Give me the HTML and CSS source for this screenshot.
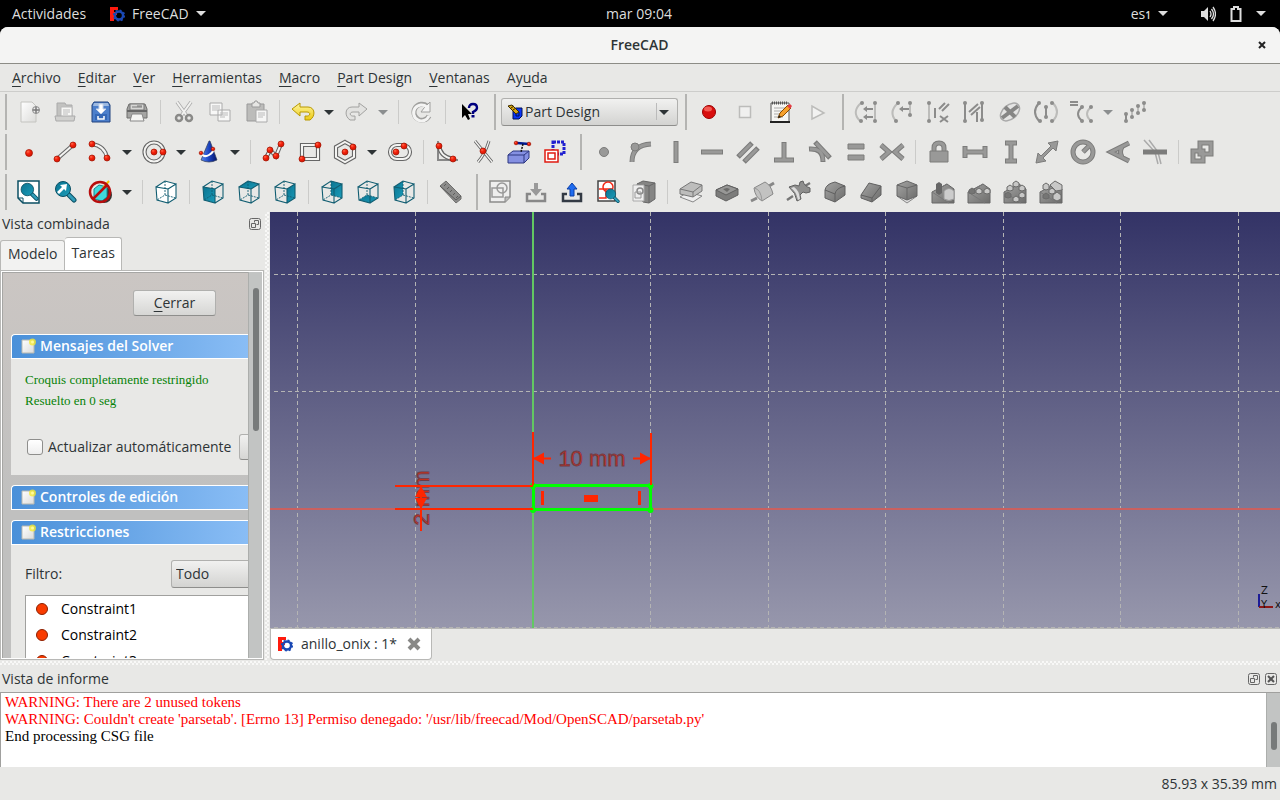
FILE: index.html
```
<!DOCTYPE html>
<html lang="es">
<head>
  <meta charset="UTF-8">
  <meta name="viewport" content="width=device-width, initial-scale=1.0">
  <title>FreeCAD</title>
  <link rel="stylesheet" href="styles.css">
</head>
<body>

<!-- shared gradients and symbols -->
<svg class="sprite" aria-hidden="true">
  <defs>
    <radialGradient id="red" cx=".35" cy=".3" r=".8"><stop offset="0" stop-color="#ff6a4a"/><stop offset=".4" stop-color="#f5200c"/><stop offset="1" stop-color="#c81400"/></radialGradient>
    <linearGradient id="gold" x2="0" y2="1"><stop offset="0" stop-color="#fff6a0"/><stop offset="1" stop-color="#edcb15"/></linearGradient>
    <linearGradient id="paper" x2="1" y2="1"><stop offset="0" stop-color="#fff"/><stop offset="1" stop-color="#dcdcda"/></linearGradient>
    <linearGradient id="teal" x2="1" y2="1"><stop offset="0" stop-color="#0a7491"/><stop offset="1" stop-color="#1b9bb8"/></linearGradient>
    <linearGradient id="grey" x2="1" y2="1"><stop offset="0" stop-color="#a4a4a3"/><stop offset="1" stop-color="#6c6c6b"/></linearGradient>
    <linearGradient id="cone" x2="1"><stop offset="0" stop-color="#5a8af0"/><stop offset=".5" stop-color="#1c44c0"/><stop offset="1" stop-color="#04146c"/></linearGradient>
    <symbol id="logo" viewBox="0 0 16 16">
      <path d="M1 1h8v3H5v2h3v3H5v6H1z" fill="#ff1a0d"/>
      <circle cx="10" cy="9.500" r="4" fill="none" stroke="#1a48b4" stroke-width="2.400"/>
      <circle cx="10" cy="9.500" r="5.300" fill="none" stroke="#1a48b4" stroke-width="1.600" stroke-dasharray="2 2.160"/>
    </symbol>
    <symbol id="cube" viewBox="0 0 24 24">
      <path class="wire" d="M2 7 14 9V23L3 20zM14 9 22 4V18L14 23M2 7 11 1 22 4"/>
      <path class="wire dash" d="M11 1V15L3 20M11 15 22 18"/>
    </symbol>
    <symbol id="lens" viewBox="0 0 24 24">
      <path d="M15 14l6 6" stroke="#0b4f63" stroke-width="5" stroke-linecap="round"/>
      <path d="M16 15l5 5" stroke="#2f9cb8" stroke-width="3" stroke-linecap="round"/>
      <circle cx="10" cy="9" r="7.500" fill="url(#teal)" stroke="#0b4f63"/>
    </symbol>
    <symbol id="task" viewBox="0 0 16 16">
      <path d="M2 2h12v13H2z" fill="url(#paper)" stroke="#b9b9b0"/>
      <circle cx="12.500" cy="4" r="3.500" fill="#f5ea2a" opacity=".75"/><circle cx="12.500" cy="4" r="1.500" fill="#fffb9a"/>
    </symbol>
    <symbol id="float" viewBox="0 0 12 12">
      <rect x=".5" y=".5" width="11" height="11" rx="2" class="thin"/>
      <path d="M5.500 4.500V2.500h4v4h-2M2.500 5.500h4v4h-4z" class="thin"/>
    </symbol>
    <symbol id="block" viewBox="0 0 24 24">
      <path d="M1 12 16 4l7 5v14H1z" fill="url(#grey)" stroke="#666"/>
      <path d="M1 12 18 23M6 10 16 4" stroke="#777" fill="none"/>
    </symbol>
  </defs>
</svg>

<div class="topbar">
  <div class="topbar-side">
    <button>Actividades</button>
    <button><svg class="logo"><use href="#logo"/></svg>FreeCAD<i class="caret"></i></button>
  </div>
  <time>mar 09:04</time>
  <div class="topbar-side right">
    <button>es<small>1</small><i class="caret"></i></button>
    <button class="system" aria-label="Sistema">
      <svg width="16" height="16" viewBox="0 0 16 16"><path d="M1 5h3l4-4v14l-4-4H1z" fill="#ddd"/><path d="M10 5q2 3 0 6M11.500 3q4 5 0 10M13 1q5 7 0 14" fill="none" stroke="#ddd" stroke-width="1.300"/></svg>
      <svg width="16" height="16" viewBox="0 0 16 16"><path d="M3.500 3H6V1h4v2h2.500v12h-9z" fill="none" stroke="#ddd" stroke-width="2"/></svg>
      <i class="caret"></i>
    </button>
  </div>
</div>

<div class="window">
  <header class="titlebar">
    <h1>FreeCAD</h1>
    <button aria-label="Cerrar ventana"><svg width="8" height="8" viewBox="0 0 8 8"><path d="M1 1l6 6M7 1L1 7" stroke="#222" stroke-width="2"/></svg></button>
  </header>

  <nav class="menubar">
    <button><u>A</u>rchivo</button>
    <button><u>E</u>ditar</button>
    <button><u>V</u>er</button>
    <button><u>H</u>erramientas</button>
    <button><u>M</u>acro</button>
    <button><u>P</u>art Design</button>
    <button><u>V</u>entanas</button>
    <button>Ay<u>u</u>da</button>
  </nav>

  <!-- file, workbench, macro, sketch tools -->
  <div class="toolbar">
    <span class="grip first"></span>
    <button class="tool off" aria-label="Nuevo"><svg viewBox="0 0 24 24"><path d="M4 2h11l4 4v16H4z" fill="url(#paper)" stroke="#c4c4c0"/><circle cx="19" cy="10" r="3.500" fill="#eee" stroke="#888"/><path d="M16 10h6M19 7v6" stroke="#777" stroke-width="1.500"/></svg></button>
    <button class="tool off" aria-label="Abrir"><svg viewBox="0 0 24 24"><path d="M4 3h8l1 2h6v12H4z" fill="#c2c2c0" stroke="#aaa"/><path d="M8 7h11v12H8z" fill="#f7f7f5" stroke="#bbb"/><path d="M10 10h7M10 12h7M10 14h5" stroke="#bbb"/><path d="M2 16h20l-1 5H3z" fill="#d0d0ce" stroke="#aaa"/></svg></button>
    <button class="tool" aria-label="Guardar"><svg viewBox="0 0 24 24"><path d="M5 2h14l2 3v17H3V5z" fill="#4c7fcb" stroke="#20437f"/><path d="M5 3h14l1 3H4z" fill="#9db9e0"/><path d="M6 14h12v6H6z" fill="#3568b6"/><path d="M10 4h4v5h3l-5 5-5-5h3z" fill="#fff" stroke="#c7d4e8"/><path d="M9 16v3h6v-3" fill="none" stroke="#fff" stroke-width="1.500"/></svg></button>
    <button class="tool" aria-label="Imprimir"><svg viewBox="0 0 24 24"><path d="M4 4h16l2 5v9H2V9z" fill="#a5a5a3" stroke="#6e6e6c"/><path d="M5 4h14v6H5z" fill="#d6d6d4" stroke="#777"/><path d="M7 7h10M12 6h5" stroke="#777"/><path d="M2 11h20" stroke="#666" stroke-width="2"/><path d="M7 14h10l2 7H5z" fill="#f4f4f2" stroke="#888"/></svg></button>
    <span class="sep"></span>
    <button class="tool off" aria-label="Cortar"><svg viewBox="0 0 24 24"><path d="M5 2l10 14M19 2L9 16" stroke="#aaa" stroke-width="3.500"/><path d="M5 2l10 14M19 2L9 16" stroke="#f2f2f0" stroke-width="2"/><circle cx="7" cy="18" r="3" fill="none" stroke="#8a8a88" stroke-width="2.500"/><circle cx="17" cy="18" r="3" fill="none" stroke="#8a8a88" stroke-width="2.500"/></svg></button>
    <button class="tool off" aria-label="Copiar"><svg viewBox="0 0 24 24"><path d="M2 3h12v12H2zM10 10h12v11H10z" fill="#f8f8f7" stroke="#aaa"/><path d="M4 6h8M4 8h8M4 10h6M12 13h8M12 15h8M12 17h5" stroke="#bbb"/></svg></button>
    <button class="tool off" aria-label="Pegar"><svg viewBox="0 0 24 24"><path d="M3 4h17v17H3z" fill="#bcbcba" stroke="#999"/><path d="M8 3h2l1-2h2l1 2h2v4H8z" fill="#e6e6e4" stroke="#999"/><path d="M12 10h11v12H12z" fill="#f6f6f5" stroke="#aaa"/><path d="M14 13h7M14 15h7M14 17h5" stroke="#bbb"/></svg></button>
    <span class="sep"></span>
    <button class="tool" aria-label="Deshacer"><svg viewBox="0 0 24 24"><path d="M1 9l8-6v4h8c7 0 8 9 2 13h-5v-4c6 1 6-4 2-4H9v4z" fill="url(#gold)" stroke="#b89800" stroke-linejoin="round"/></svg></button>
    <button class="drop" aria-label="Lista de deshacer"></button>
    <button class="tool off" aria-label="Rehacer"><svg viewBox="0 0 24 24"><path d="M22 9l-8-6v4H7c-7 0-8 9-2 13h5v-4c-6 1-6-4-2-4h6v4z" fill="#e2e2e0" stroke="#a2a2a0" stroke-linejoin="round"/></svg></button>
    <button class="drop off" aria-label="Lista de rehacer"></button>
    <span class="sep"></span>
    <button class="tool off" aria-label="Recalcular"><svg viewBox="0 0 24 24"><path d="M17 6a8 8 0 1 0 2 10" fill="none" stroke="#a0a09e" stroke-width="5"/><path d="M20 2v10h-9l3-4z" fill="#f4f4f3" stroke="#a0a09e"/><path d="M17 7a8 8 0 1 0 2 9" fill="none" stroke="#f4f4f3" stroke-width="3"/></svg></button>
    <span class="sep"></span>
    <button class="tool" aria-label="¿Qué es esto?"><svg viewBox="0 0 24 24"><path d="M5 4v14l3-3 3 5 2-1-2-5h4z" fill="#000"/><path d="M12 8q0-4 4-4t4 4q0 2-4 4v2" fill="none" stroke="#00007f" stroke-width="2.400"/><path d="M14.500 15h3v2.500h-3z" fill="#00007f"/></svg></button>
    <span class="grip"></span>
    <div class="workbench">
      <svg viewBox="0 0 16 16"><path d="M6 6l3-2h6v8l-3 3H6z" fill="#0b35f8" stroke="#001050"/><path d="M9 12V8h3v4z" fill="none" stroke="#001050"/><path d="M1 2l4-1 7 7-3 2z" fill="#d6a411" stroke="#3d2c00"/><path d="M4 4l3-2M6 6l3-2" stroke="#3d2c00"/></svg>
      <select aria-label="Entorno de trabajo"><option>Part Design</option></select>
    </div>
    <span class="grip"></span>
    <button class="tool" aria-label="Grabar macro"><svg viewBox="0 0 24 24"><circle cx="12" cy="12" r="6.500" fill="#d80e0e" stroke="#9b0000"/><ellipse cx="11" cy="9" rx="4" ry="2.500" fill="#ff7b70" opacity=".7"/></svg></button>
    <button class="tool off" aria-label="Detener macro"><svg viewBox="0 0 24 24"><path d="M6.500 6.500h11v11h-11z" fill="#f0f0ef" stroke="#bcbcba" stroke-width="1.500"/></svg></button>
    <button class="tool" aria-label="Macros"><svg viewBox="0 0 24 24"><path d="M2 3h18v19H2z" fill="#f6f6f4" stroke="#555"/><path d="M1 22h20" stroke="#222" stroke-width="2"/><path d="M3 3h16" stroke="#555" stroke-width="3" stroke-dasharray="1 1"/><path d="M5 8h11M5 11h9M5 14h6M5 17h9" stroke="#aaa"/><path d="M9 18l2-5 8-8 3 3-8 8z" fill="#f7a12c" stroke="#8a4c00"/><path d="M18 6l3-2 2 2-2 3z" fill="#e33c45"/><path d="M9 18l1-3 2 2z" fill="#222"/></svg></button>
    <button class="tool off" aria-label="Ejecutar macro"><svg viewBox="0 0 24 24"><path d="M7 6v13l12-6z" fill="#f2f2f1" stroke="#bcbcba" stroke-width="1.500"/></svg></button>
    <span class="grip"></span>
    <button class="tool off" aria-label="Cerrar forma"><svg viewBox="0 0 24 24"><path class="pale" d="M7 3Q-3 12 6 21M21 3v18"/><path class="flat" d="M19 9h-7M19 17h-7"/><path class="fill" d="M13 6v6l-4-3zM13 14v6l-4-3z"/><g class="dots"><circle cx="8" cy="3" r="2"/><circle cx="7" cy="21" r="2"/><circle cx="21" cy="3" r="2"/><circle cx="21" cy="21" r="2"/></g></svg></button>
    <button class="tool off" aria-label="Conectar aristas"><svg viewBox="0 0 24 24"><path class="pale" d="M8 3Q-2 12 6 21M20 3v12"/><path class="flat" d="M19 9h-7"/><path class="fill" d="M13 6v6l-4-3z"/><g class="dots"><circle cx="8" cy="3" r="2"/><circle cx="6" cy="21" r="2"/><circle cx="20" cy="3" r="2"/><circle cx="20" cy="15" r="2"/></g></svg></button>
    <button class="tool off" aria-label="Seleccionar restricciones"><svg viewBox="0 0 24 24"><path class="pale" d="M3 3v18"/><path class="flat" d="M9 8v10M13 9l6-6M16 11l7-7M14 16l4 3-4 3M22 16l-4 3 4 3"/><g class="dots"><circle cx="3" cy="3" r="2"/><circle cx="3" cy="21" r="2"/></g></svg></button>
    <button class="tool off" aria-label="Seleccionar elementos"><svg viewBox="0 0 24 24"><path class="flat" d="M3 3v18M20 2v18M7 12l9-8M9 15l9-8M15 12v10"/><g class="dots"><circle cx="3" cy="3" r="2"/><circle cx="3" cy="21" r="2"/><circle cx="20" cy="3" r="2"/><circle cx="20" cy="20" r="2"/></g></svg></button>
    <button class="tool off" aria-label="Geometría interna"><svg viewBox="0 0 24 24"><ellipse cx="12" cy="12" rx="11" ry="7" transform="rotate(-40 12 12)" fill="#e4e4e3" stroke="#aaa" stroke-width="1.500"/><path d="M4 18L20 6M7 7l10 10" stroke="#868685" stroke-width="4"/></svg></button>
    <button class="tool off" aria-label="Simetría"><svg viewBox="0 0 24 24"><path class="pale" d="M19 3q8 9 0 18"/><path class="flat" d="M5 3q-8 9 0 18M12 8v10"/><g class="dots"><circle cx="5" cy="3" r="2"/><circle cx="6" cy="21" r="2"/><circle cx="12" cy="7" r="2"/><circle cx="12" cy="17" r="2"/><circle cx="18" cy="3" r="2"/><circle cx="18" cy="21" r="2"/></g></svg></button>
    <button class="tool off" aria-label="Clonar"><svg viewBox="0 0 24 24"><path class="flat" d="M0 2h8M0 5h8M12 7q-8 7 0 14"/><path class="pale" d="M21 7q-8 7 0 14"/><g class="dots"><circle cx="12" cy="7" r="2"/><circle cx="12" cy="21" r="2"/><circle cx="21" cy="7" r="2"/><circle cx="21" cy="21" r="2"/></g></svg></button>
    <button class="drop off" aria-label="Opciones de clonar"></button>
    <button class="tool off" aria-label="Matriz rectangular"><svg viewBox="0 0 24 24"><path class="flat" d="M2 14v7"/><path class="pale" d="M8 10v7M14 6v7M20 3v7"/><g class="dots"><circle cx="2" cy="14" r="2"/><circle cx="2" cy="21" r="2"/><circle cx="8" cy="10" r="2"/><circle cx="8" cy="17" r="2"/><circle cx="14" cy="6" r="2"/><circle cx="14" cy="13" r="2"/><circle cx="20" cy="3" r="2"/><circle cx="20" cy="10" r="2"/></g></svg></button>
  </div>

  <!-- sketch geometry and constraints -->
  <div class="toolbar">
    <span class="grip first"></span>
    <button class="tool" aria-label="Punto"><svg viewBox="0 0 24 24"><circle class="node" cx="12" cy="13" r="3.500"/></svg></button>
    <button class="tool" aria-label="Línea"><svg viewBox="0 0 24 24"><path class="rod" d="M4 19L20 5"/><path class="core" d="M4 19L20 5"/><circle class="node" cx="4" cy="19" r="3"/><circle class="node" cx="20" cy="5" r="3"/></svg></button>
    <button class="tool" aria-label="Arco"><svg viewBox="0 0 24 24"><path class="rod" d="M3 4q13 2 15 14"/><path class="core" d="M3 4q13 2 15 14"/><circle class="node" cx="3" cy="4" r="3"/><circle class="node" cx="3" cy="18" r="3"/><circle class="node" cx="18" cy="18" r="3"/></svg></button>
    <button class="drop" aria-label="Más arcos"></button>
    <button class="tool" aria-label="Círculo"><svg viewBox="0 0 24 24"><circle class="rod" cx="11" cy="12" r="9.500"/><circle class="core" cx="11" cy="12" r="9.500"/><circle class="node" cx="11" cy="12" r="3"/><circle class="node" cx="20" cy="12" r="3"/></svg></button>
    <button class="drop" aria-label="Más círculos"></button>
    <button class="tool" aria-label="Cónicas"><svg viewBox="0 0 24 24"><path d="M12 1L4 20q8 4 16 0L13 1z" fill="url(#cone)" stroke="#303c58" stroke-width=".7"/><path d="M4 13q3 5 8 2t4-6" fill="none" stroke="#fff" stroke-width="2"/><circle class="node" cx="4" cy="13" r="1.800"/><circle class="node" cx="16" cy="9" r="1.800"/></svg></button>
    <button class="drop" aria-label="Más cónicas"></button>
    <span class="sep"></span>
    <button class="tool" aria-label="Polilínea"><svg viewBox="0 0 24 24"><path class="rod" d="M4 18l4-8 6 6 5-12"/><path class="core" d="M4 18l4-8 6 6 5-12"/><circle class="node" cx="4" cy="18" r="3"/><circle class="node" cx="8" cy="10" r="3"/><circle class="node" cx="14" cy="16" r="3"/><circle class="node" cx="19" cy="4" r="3"/></svg></button>
    <button class="tool" aria-label="Rectángulo"><svg viewBox="0 0 24 24"><path class="rod" d="M4 5h16v14H4z"/><path class="core" d="M4 5h16v14H4z"/><circle class="node" cx="4" cy="19" r="3"/><circle class="node" cx="20" cy="5" r="3"/></svg></button>
    <button class="tool" aria-label="Polígono"><svg viewBox="0 0 24 24"><path class="rod" d="M11 2l9 5v10l-9 5-9-5V7z"/><path class="core" d="M11 2l9 5v10l-9 5-9-5V7z"/><circle class="node" cx="11" cy="12" r="3"/><circle class="node" cx="19" cy="7" r="3"/></svg></button>
    <button class="drop" aria-label="Más polígonos"></button>
    <button class="tool" aria-label="Ranura"><svg viewBox="0 0 24 24"><rect class="rod" x="2" y="5" width="20" height="14" rx="7"/><rect class="core" x="2" y="5" width="20" height="14" rx="7"/><circle class="node" cx="8" cy="12" r="3"/><circle class="node" cx="16" cy="6" r="3"/></svg></button>
    <span class="sep"></span>
    <button class="tool" aria-label="Redondeo"><svg viewBox="0 0 24 24"><path d="M3 1v19h20" fill="none" stroke="#888" stroke-width="2"/><path class="rod" d="M4 5q1 12 14 14"/><path class="core" d="M4 5q1 12 14 14"/><circle class="node" cx="4" cy="6" r="3"/><circle class="node" cx="18" cy="19" r="3"/></svg></button>
    <button class="tool" aria-label="Recortar"><svg viewBox="0 0 24 24"><path class="rod slim" d="M4 1l17 21M18 1Q14 14 7 22"/><path class="core slim" d="M4 1l17 21M18 1Q14 14 7 22"/><circle class="node" cx="12" cy="11" r="3"/></svg></button>
    <button class="tool" aria-label="Geometría externa"><svg viewBox="0 0 24 24"><path d="M1 15l5-4h16v7l-5 5H1z" fill="#8590e2" stroke="#2c3680"/><path d="M1 15h16l5-4M17 15v8" fill="none" stroke="#2c3680"/><path d="M10 3l12 1" stroke="#001a90" stroke-width="2.500"/><path d="M16 4l-2 8" stroke="#111" stroke-width="1.500" stroke-dasharray="2 1"/><circle class="node" cx="9" cy="3" r="1.800"/><circle class="node" cx="22" cy="4" r="1.800"/></svg></button>
    <button class="tool" aria-label="Copia"><svg viewBox="0 0 24 24"><path d="M10 2h11v12H10z" fill="none" stroke="#2020d0" stroke-width="3" stroke-dasharray="3 1"/><path d="M2 10h13v12H2zM5 13h7v6H5z" fill="#fff" stroke="#e01b12" stroke-width="1.500"/></svg></button>
    <span class="grip"></span>
    <button class="tool off" aria-label="Coincidente"><svg viewBox="0 0 24 24"><circle class="solid" cx="12" cy="12" r="4.500"/></svg></button>
    <button class="tool off" aria-label="Punto en objeto"><svg viewBox="0 0 24 24"><path class="edge" d="M4 22Q4 5 23 4"/><path class="bar" d="M4 22Q4 5 23 4"/><circle class="solid" cx="7" cy="7" r="4"/></svg></button>
    <button class="tool off" aria-label="Vertical"><svg viewBox="0 0 24 24"><path class="edge" d="M12 1v22"/><path class="bar" d="M12 2v20"/></svg></button>
    <button class="tool off" aria-label="Horizontal"><svg viewBox="0 0 24 24"><path class="edge" d="M1 12h22"/><path class="bar" d="M2 12h20"/></svg></button>
    <button class="tool off" aria-label="Paralela"><svg viewBox="0 0 24 24"><path class="edge" d="M2 17L16 3M8 22L22 8"/><path class="bar" d="M3 16L15 4M9 21L21 9"/></svg></button>
    <button class="tool off" aria-label="Perpendicular"><svg viewBox="0 0 24 24"><path class="edge" d="M12 2v18M2 20h20"/><path class="bar" d="M12 3v17M3 20h18"/></svg></button>
    <button class="tool off" aria-label="Tangente"><svg viewBox="0 0 24 24"><path class="edge" d="M1 9q14-1 14 13M7 2l15 16"/><path class="bar" d="M2 9q13-1 13 12M8 3l13 14"/></svg></button>
    <button class="tool off" aria-label="Igual"><svg viewBox="0 0 24 24"><path class="solid" d="M4 4h16v5H4zM4 15h16v5H4z"/></svg></button>
    <button class="tool off" aria-label="Simétrica"><svg viewBox="0 0 24 24"><path class="edge" d="M1 5l8 7-8 7M23 5l-8 7 8 7"/><path class="bar" d="M1 5l8 7-8 7M23 5l-8 7 8 7"/></svg></button>
    <span class="sep"></span>
    <button class="tool off" aria-label="Bloquear"><svg viewBox="0 0 24 24"><path class="edge" d="M7 12V8q0-5 5-5t5 5v4"/><path class="bar" d="M7 12V8q0-5 5-5t5 5v4"/><path class="solid" d="M3 11h18v11H3z"/></svg></button>
    <button class="tool off" aria-label="Distancia horizontal"><svg viewBox="0 0 24 24"><path class="edge" d="M2 12h20M2 6v12M22 6v12"/><path class="bar" d="M2 12h20M2 7v10M22 7v10"/></svg></button>
    <button class="tool off" aria-label="Distancia vertical"><svg viewBox="0 0 24 24"><path class="edge" d="M12 3v18M6 3h12M6 21h12"/><path class="bar" d="M12 3v18M7 3h10M7 21h10"/></svg></button>
    <button class="tool off" aria-label="Distancia"><svg viewBox="0 0 24 24"><path class="solid" d="M1 23l2-10 3 3L16 6l-3-3 10-2-2 10-3-3L8 18l3 3z"/></svg></button>
    <button class="tool off" aria-label="Radio"><svg viewBox="0 0 24 24"><path class="edge" d="M12 12l6-6"/><circle class="edge" cx="12" cy="12" r="10"/><circle class="bar" cx="12" cy="12" r="10"/><path class="bar" d="M12 12l6-6"/></svg></button>
    <button class="tool off" aria-label="Ángulo"><svg viewBox="0 0 24 24"><path class="edge" d="M22 3L4 12l18 9M15 7q-3 5 0 10"/><path class="bar" d="M22 3L4 12l18 9M15 7q-3 5 0 10"/></svg></button>
    <button class="tool off" aria-label="Ley de Snell"><svg viewBox="0 0 24 24"><path d="M1 0l11 12 3 12M6 0l9 12 3 12" fill="none" stroke="#aaa" stroke-width="1.500"/><path class="edge" d="M0 12h24"/></svg></button>
    <span class="sep"></span>
    <button class="tool off" aria-label="Alternar"><svg viewBox="0 0 24 24"><path class="edge" d="M10 3h11v11H10zM3 11h10v10H3z"/><path class="bar" d="M10 3h11v11H10z"/><path class="bar" d="M3 11h10v10H3z"/></svg></button>
  </div>

  <!-- views and part design -->
  <div class="toolbar">
    <span class="grip first"></span>
    <button class="tool" aria-label="Ajustar todo"><svg viewBox="0 0 24 24"><path d="M1 1h21v22H6l-5-5z" fill="#fff" stroke="#0b4f63" stroke-width="1.500"/><path d="M1 18h5v5" fill="none" stroke="#0b4f63"/><use href="#lens" x="2" y="2" width="20" height="20"/></svg></button>
    <button class="tool" aria-label="Ajustar selección"><svg viewBox="0 0 24 24"><use href="#lens" width="24" height="24"/><path d="M4 12l5-5-2-2 7-1-1 7-2-2-5 5z" fill="#fff"/></svg></button>
    <button class="tool" aria-label="Estilo de dibujo"><svg viewBox="0 0 24 24"><circle cx="15" cy="15" r="8" fill="#333"/><path d="M5 9l5-4 8 2v10l-5 4-8-2z" fill="#3fd8dc" stroke="#158a90"/><path d="M14 8l6-7" stroke="#f2c300" stroke-width="2"/><circle cx="11" cy="12" r="10" fill="none" stroke="#b80d0d" stroke-width="2.500"/><path d="M4 19L18 5" stroke="#b80d0d" stroke-width="2.500"/></svg></button>
    <button class="drop" aria-label="Más estilos"></button>
    <span class="sep"></span>
    <button class="tool" aria-label="Axonométrica"><svg viewBox="0 0 24 24"><path d="M2 7l9-6 11 3v14l-8 5-11-3z" fill="#fff"/><use href="#cube"/></svg></button>
    <span class="sep"></span>
    <button class="tool" aria-label="Frontal"><svg viewBox="0 0 24 24"><path d="M2 7l12 2v14L3 20z" fill="url(#teal)"/><use href="#cube"/></svg></button>
    <button class="tool" aria-label="Superior"><svg viewBox="0 0 24 24"><path d="M2 7l9-6 11 3-8 5z" fill="url(#teal)"/><use href="#cube"/></svg></button>
    <button class="tool" aria-label="Derecha"><svg viewBox="0 0 24 24"><path d="M14 9l8-5v14l-8 5z" fill="url(#teal)"/><use href="#cube"/></svg></button>
    <span class="sep"></span>
    <button class="tool" aria-label="Posterior"><svg viewBox="0 0 24 24"><path d="M11 1l11 3v14l-11-3z" fill="url(#teal)"/><use href="#cube"/></svg></button>
    <button class="tool" aria-label="Inferior"><svg viewBox="0 0 24 24"><path d="M3 20l8-5 11 3-8 5z" fill="url(#teal)"/><use href="#cube"/></svg></button>
    <button class="tool" aria-label="Izquierda"><svg viewBox="0 0 24 24"><path d="M2 7l9-6v14l-8 5z" fill="url(#teal)"/><use href="#cube"/></svg></button>
    <span class="sep"></span>
    <button class="tool off" aria-label="Medir"><svg viewBox="0 0 24 24"><path d="M1 6l6-5 15 15v3l-5 4z" fill="#8c8c8b" stroke="#6e6e6d"/><path d="M7 4l-2 2M10 7L8 9M13 10l-2 2M16 13l-2 2M19 16l-2 2M1 6l16 14 5-4" fill="none" stroke="#5c5c5b"/></svg></button>
    <span class="grip"></span>
    <button class="tool off" aria-label="Crear croquis"><svg viewBox="0 0 24 24"><path d="M2 1h20v16l-5 5H2z" fill="#eee" stroke="#8c8c8b" stroke-width="1.500"/><path d="M4 8h11v9H4z" fill="none" stroke="#999" stroke-width="1.500"/><circle cx="14" cy="8" r="5" fill="none" stroke="#999" stroke-width="1.500"/><path d="M22 17h-5v5" fill="#bbb" stroke="#888"/></svg></button>
    <button class="tool off" aria-label="Editar croquis"><svg viewBox="0 0 24 24"><path d="M7 14H3v7h18v-7h-4" fill="none" stroke="#888" stroke-width="2.500"/><path d="M10 3h4v6h4l-6 7-6-7h4z" fill="#999"/></svg></button>
    <button class="tool" aria-label="Salir del croquis"><svg viewBox="0 0 24 24"><path d="M7 14H3v7h18v-7h-4" fill="none" stroke="#333a44" stroke-width="2.500"/><path d="M10 16v-7H7l5-6 5 6h-3v7z" fill="#1f6cf0" stroke="#0d3fa6"/></svg></button>
    <button class="tool" aria-label="Ver croquis"><svg viewBox="0 0 24 24"><path d="M2 1h17v20H2z" fill="#fff" stroke="#444" stroke-width="1.500"/><path d="M3 9h13M10 9v9H3" fill="none" stroke="#f22a18" stroke-width="1.500"/><circle cx="12" cy="7" r="5" fill="none" stroke="#f22a18" stroke-width="1.500"/><use href="#lens" x="8" y="8" width="16" height="16"/></svg></button>
    <button class="tool off" aria-label="Mapear croquis"><svg viewBox="0 0 24 24"><path d="M5 4l6-3 12 2v16l-6 4-6-1z" fill="#858584" stroke="#666"/><path d="M17 6v17M17 6l6-3M5 4l12 2" fill="none" stroke="#666"/><path d="M1 5h11v16H1z" fill="#eee" stroke="#aaa"/><circle cx="8" cy="11" r="3" fill="none" stroke="#888" stroke-width="1.500"/><path d="M3 12h6v6H3z" fill="none" stroke="#999"/></svg></button>
    <span class="sep"></span>
    <button class="tool off" aria-label="Extruir"><svg viewBox="0 0 24 24"><path d="M1 17l8-5 14 4-9 6z" fill="#eee" stroke="#888"/><path d="M1 9l11-7 11 3v6l-9 6-13-3z" fill="#bdbdbc" stroke="#777"/><path d="M1 9l13 3 9-7M14 12v5" fill="none" stroke="#777"/></svg></button>
    <button class="tool off" aria-label="Vaciado"><svg viewBox="0 0 24 24"><path d="M1 10l11-5 11 4v6l-12 6-10-5z" fill="#7c7c7b" stroke="#606060"/><path d="M1 10l11-5 11 4-12 6z" fill="#979796" stroke="#606060"/><path d="M8 9l4-1 3 1-3 3z" fill="#6a6a69"/></svg></button>
    <button class="tool off" aria-label="Revolución"><svg viewBox="0 0 24 24"><path d="M0 21l6-3M18 6l5-3" stroke="#888" stroke-width="3"/><path d="M3 8l11-6q6 3 8 12l-11 7Q4 17 3 8z" fill="#c2c2c1" stroke="#888"/><path d="M3 8q7 1 8 13" fill="none" stroke="#999"/></svg></button>
    <button class="tool off" aria-label="Ranura de revolución"><svg viewBox="0 0 24 24"><path d="M0 20l6-4M18 6l5-3" stroke="#777" stroke-width="2.500"/><path d="M2 7l6-2 4 1 1-4 3-1q1 5 7 7v4l-4 1-3-1-3 3 1 4-4 2Q9 13 2 7z" fill="#8e8e8d" stroke="#606060"/><path d="M4 8q5 3 7 12l2-1Q12 10 7 7z" fill="#ddd"/></svg></button>
    <button class="tool off" aria-label="Redondeo de pieza"><svg viewBox="0 0 24 24"><path d="M2 10q1-6 10-8l10 4v9l-10 7-10-4z" fill="url(#grey)" stroke="#606060"/><path d="M12 22v-8q1-6 10-8M2 10l10 4" fill="none" stroke="#606060"/></svg></button>
    <button class="tool off" aria-label="Chaflán"><svg viewBox="0 0 24 24"><path d="M2 15l8-12 12 3v9l-9 7-11-4z" fill="url(#grey)" stroke="#606060"/><path d="M13 22v-4L22 6M2 15l11 3" fill="none" stroke="#606060"/></svg></button>
    <button class="tool off" aria-label="Ángulo de salida"><svg viewBox="0 0 24 24"><path d="M2 16l10-3 10 3-10 7z" fill="#ddd" stroke="#888"/><path d="M2 5l10-4 10 4v11l-10 4-10-4z" fill="url(#grey)" stroke="#666"/><path d="M2 5l10 3 10-3M12 8v12" fill="none" stroke="#666"/></svg></button>
    <button class="tool off" aria-label="Simetría de pieza"><svg viewBox="0 0 24 24"><use href="#block"/><path d="M5 4l3-2 3 2v9l-3 2-3-2z" fill="#666"/><path d="M13 11q5-5 10 0v8q-5 3-10 0z" fill="#ccc" stroke="#999"/></svg></button>
    <button class="tool off" aria-label="Matriz lineal"><svg viewBox="0 0 24 24"><use href="#block"/><g class="chips"><path d="M2 10l3-2 3 2v3l-3 1-3-1z" class="dark"/><path d="M9 10l3-2 3 2v3l-3 1-3-1z"/><path d="M17 10l3-2 3 2v3l-3 1-3-1z"/></g></svg></button>
    <button class="tool off" aria-label="Matriz polar"><svg viewBox="0 0 24 24"><use href="#block"/><g class="chips"><path d="M10 3l3-2 3 2v3l-3 1-3-1z"/><path d="M4 7l3-2 3 2v3l-3 1-3-1z"/><path d="M16 7l3-2 3 2v3l-3 1-3-1z"/><path d="M2 14l3-2 3 2v3l-3 1-3-1z" class="dark"/><path d="M16 14l3-2 3 2v3l-3 1-3-1z"/><path d="M10 18l3-2 3 2v3l-3 1-3-1z"/></g></svg></button>
    <button class="tool off" aria-label="MultiTransformación"><svg viewBox="0 0 24 24"><use href="#block"/><g class="chips"><path d="M11 5l5-4 7 4v5l-6 1z"/><path d="M4 5l3-2 3 2v4l-3 1-3-1z"/><path d="M10 10l3-2 3 2v3l-3 1-3-1z"/><path d="M14 15l4-3 4 3v4l-4 2-4-2z"/><path d="M4 15l3-2 3 2v3l-3 1-3-1z" class="dark"/></g></svg></button>
  </div>

  <main class="workspace">
    <aside class="combo-view">
      <div class="dock-title">
        <h2>Vista combinada</h2>
        <button aria-label="Desacoplar"><svg width="12" height="12"><use href="#float"/></svg></button>
      </div>
      <div class="tabs">
        <button>Modelo</button>
        <button class="active">Tareas</button>
      </div>
      <div class="task-frame">
        <div class="task-scroll">
          <button class="push close-task"><u>C</u>errar</button>

          <section class="task">
            <h3><svg><use href="#task"/></svg>Mensajes del Solver</h3>
            <div class="task-body solver">
              <p>Croquis completamente restringido</p>
              <p>Resuelto en 0 seg</p>
              <div class="auto-row">
                <label><input type="checkbox">Actualizar automáticamente</label>
                <button class="push update" aria-label="Actualizar"></button>
              </div>
            </div>
          </section>

          <section class="task">
            <h3><svg><use href="#task"/></svg>Controles de edición</h3>
          </section>

          <section class="task">
            <h3><svg><use href="#task"/></svg>Restricciones</h3>
            <div class="task-body">
              <div class="filter-row">
                <label for="filter">Filtro:</label>
                <select id="filter"><option>Todo</option></select>
              </div>
              <ul class="constraints">
                <li>Constraint1</li>
                <li>Constraint2</li>
                <li>Constraint3</li>
              </ul>
            </div>
          </section>
        </div>
        <div class="scrollbar"><span class="thumb"></span></div>
      </div>
    </aside>
    <div class="splitter"></div>

    <div class="mdi">
      <svg class="viewport" viewBox="0 0 1010 416" preserveAspectRatio="xMinYMin slice" role="img" aria-label="Croquis">
        <defs><linearGradient id="sky" x2="0" y2="1"><stop offset="0" stop-color="#333366"/><stop offset="1" stop-color="#9797ac"/></linearGradient></defs>
        <rect width="1010" height="416" fill="url(#sky)"/>
        <path class="grid" d="M27.500 0V416M145.500 0V416M380.500 0V416M498.500 0V416M615.500 0V416M733.500 0V416M850.500 0V416M968.500 0V416M4 62.500H1010M4 179.500H1010M4 415.500H1010"/>
        <path d="M0 297H1010" stroke="#c9605f" stroke-width="2"/>
        <path d="M263 0V416" stroke="#62c862" stroke-width="2"/>

        <!-- 10 x 2 mm profile -->
        <rect x="263.500" y="273.500" width="117" height="24" fill="none" stroke="#00ff00" stroke-width="3"/>
        <g fill="#00ff00"><circle cx="263" cy="274" r="3"/><circle cx="380.500" cy="274" r="3"/><circle cx="263" cy="298" r="3"/><circle cx="380.500" cy="298" r="3"/></g>
        <g class="mark"><rect x="271" y="279" width="3" height="14"/><rect x="368" y="279" width="3" height="14"/><rect x="314" y="283" width="14" height="7"/></g>

        <text class="dim-text" x="322" y="254">10 mm</text>
        <text class="dim-text" transform="translate(159 286) rotate(-90)">2 mm</text>
        <path class="dim" d="M263 220V273M381 221V273M263 246.500H281M363 246.500H381M125 274H263M125 297H263M151 275V319"/>
        <path class="mark" d="M263 246.500l11-6v12zM381 246.500l-11-6v12zM151 274l-6 11h12zM151 297l-6-11h12z"/>

        <g class="axis">
          <path d="M989 395V382" stroke="#1c1c96" stroke-width="2"/>
          <path d="M989 395h14" stroke="#8c1616" stroke-width="2"/>
          <text x="991" y="382">Z</text><text x="991" y="396">Y</text><text x="1005" y="396">x</text>
        </g>
      </svg>
      <div class="doc-tabs">
        <div class="doc-tab">
          <svg class="logo"><use href="#logo"/></svg>
          <span>anillo_onix : 1*</span>
          <button aria-label="Cerrar documento"><svg width="14" height="14" viewBox="0 0 14 14"><path d="M2 2l10 10M12 2L2 12" stroke="#888886" stroke-width="4"/></svg></button>
        </div>
      </div>
    </div>
  </main>

  <div class="splitter wide"></div>
  <section class="report">
    <div class="dock-title">
      <h2>Vista de informe</h2>
      <button aria-label="Desacoplar informe"><svg width="12" height="12"><use href="#float"/></svg></button>
      <button aria-label="Cerrar informe"><svg width="12" height="12" viewBox="0 0 12 12"><rect x=".5" y=".5" width="11" height="11" rx="2" class="thin"/><path d="M3 3l6 6M9 3L3 9" stroke="#555" stroke-width="2"/></svg></button>
    </div>
    <div class="log">
      <div class="log-text">
        <p class="warn">WARNING: There are 2 unused tokens</p>
        <p class="warn">WARNING: Couldn't create 'parsetab'. [Errno 13] Permiso denegado: '/usr/lib/freecad/Mod/OpenSCAD/parsetab.py'</p>
        <p>End processing CSG file</p>
      </div>
      <div class="scrollbar"><span class="thumb"></span></div>
    </div>
  </section>

  <footer class="statusbar">85.93 x 35.39 mm</footer>
</div>

</body>
</html>
```
FILE: styles.css
```
*{box-sizing:border-box;}
body{margin:0;height:100vh;display:flex;flex-direction:column;background:#000;
  font:14px/20px "Open Sans","Noto Sans",sans-serif;color:#2e3436;overflow:hidden;}
h1,h2,h3,p,ul{margin:0;padding:0;}
button,select{font:inherit;color:inherit;}
button{border:0;background:none;padding:0;}
.sprite{position:absolute;width:0;height:0;}

/* desktop bar */
.topbar{height:27px;flex:none;display:flex;align-items:center;color:#ddd;padding:0 14px 0 12px;}
.topbar-side{flex:1;display:flex;gap:23px;align-items:center;}
.topbar-side.right{justify-content:flex-end;gap:32px;}
.topbar button{display:flex;align-items:center;gap:7px;}
.topbar button.system{gap:12px;}
.topbar small{font-size:10px;font-weight:600;margin-left:-7px;padding-top:2px;}
.logo{width:16px;height:16px;}
.caret{border:5px solid transparent;border-top-color:currentColor;border-bottom:0;}

/* window frame */
.window{flex:1;min-height:0;display:flex;flex-direction:column;background:#e8e8e6;
  border-radius:8px 8px 0 0;overflow:hidden;}
.titlebar{height:37px;flex:none;display:flex;align-items:center;background:#f4f4f3;
  border-bottom:1px solid #8c8c86;padding:0 14px;}
.titlebar h1{flex:1;padding-left:7px;text-align:center;font-size:14px;font-weight:600;}
.titlebar button{display:flex;}
.menubar{height:28px;flex:none;display:flex;align-items:center;gap:17px;padding:0 12px;
  border-bottom:1px solid #cdcdcb;}
u{text-underline-offset:3px;}

/* toolbars */
.toolbar{height:40px;flex:none;display:flex;align-items:center;}
.tool{width:36px;height:36px;flex:none;display:flex;align-items:center;justify-content:center;}
.tool svg{width:24px;height:24px;overflow:visible;}
.drop{width:18px;height:36px;flex:none;display:flex;align-items:center;justify-content:center;padding-right:2px;}
.drop::before{content:"";border:5px solid transparent;border-top-color:#2e3436;border-bottom:0;}
.drop.off::before{border-top-color:#8b8e8f;}
.sep{width:11px;height:24px;flex:none;display:flex;justify-content:center;}
.sep::before{content:"";border-left:1px solid #cbcbc9;}
.grip{width:13px;height:36px;flex:none;display:flex;padding-left:7px;}
.grip.first{width:11px;padding-left:5px;}
.grip::before{content:"";border-left:2px solid #b4b4b2;}
.workbench{position:relative;width:177px;height:28px;margin-left:1px;}
.workbench select{width:100%;height:28px;padding-left:23px;appearance:none;border:1px solid #b0b0ae;
  border-bottom-color:#8e8e8c;border-radius:3px;background:linear-gradient(#f1f1f0,#d3d3d1);}
.workbench svg{position:absolute;left:6px;top:6px;width:16px;height:16px;}
.workbench::after{content:"";position:absolute;right:9px;top:12px;
  border:5px solid transparent;border-top-color:#2e3436;border-bottom:0;}
.workbench::before{content:"";position:absolute;right:21px;top:5px;height:17px;border-left:1px solid #bbb;}

/* icon strokes */
.node{fill:url(#red);stroke:#a01200;stroke-width:.7;}
.rod{fill:none;stroke:#666;stroke-width:4.2;}
.core{fill:none;stroke:#f4f4f2;stroke-width:2;}
.rod.slim{stroke-width:3;}
.core.slim{stroke-width:1.2;}
.edge{fill:none;stroke:#7c7c7b;stroke-width:5;}
.bar{fill:none;stroke:#999998;stroke-width:3;}
.solid{fill:#999998;stroke:#7c7c7b;}
.pale{fill:none;stroke:#bcbcba;stroke-width:2;}
.flat{fill:none;stroke:#8c8c8b;stroke-width:2;}
.fill,.dots{fill:#8c8c8b;}
.chips{fill:#c8c8c7;stroke:#6b6b6a;}
.chips .dark{fill:#757574;}
.wire{fill:none;stroke:#125e72;stroke-width:1.1;}
.wire.dash{stroke-width:.9;stroke-dasharray:2 1;}
.thin{fill:none;stroke:#666;}

/* workspace */
.workspace{flex:1;min-height:0;display:flex;}
.combo-view{width:264px;flex:none;display:flex;flex-direction:column;}
.splitter{width:4px;flex:none;margin:0 1px;
  background:repeating-conic-gradient(#f8f8f7 0 25%,#e8e8e6 0 50%) 0 0/4px 4px;}
.splitter.wide{width:auto;height:4px;margin:1px 0;}
.dock-title{height:24px;flex:none;display:flex;align-items:center;gap:5px;padding:0 3px 0 2px;}
.dock-title h2{flex:1;font-size:14px;font-weight:400;}
.dock-title button{display:flex;}
.tabs{height:34px;flex:none;display:flex;align-items:flex-end;}
.tabs button{height:30px;padding:0 7px 3px;border:1px solid #b8b8b6;border-bottom:0;
  border-radius:3px 3px 0 0;background:#f2f2f1;}
.tabs .active{height:33px;padding:0 6px 2px;background:#fff;border-left:0;}
.task-frame{flex:1;min-height:0;display:flex;border:1px solid #b8b8b6;padding:1px;
  background:#fff;}
.task-scroll{flex:1;min-width:0;overflow:hidden;display:flex;flex-direction:column;gap:10px;
  padding:17px 0 0 8px;border:solid #a6a6a4;border-width:1px 0 0 1px;
  background:linear-gradient(#cbc6c3,#c0c0bf 60%);}
.scrollbar{width:14px;flex:none;background:#c2c4c3;border-left:1px solid #acaeac;
  display:flex;justify-content:center;}
.thumb{width:6px;border-radius:3px;background:#777a7a;}
.combo-view .thumb{height:37%;margin-top:16px;}
.push{height:26px;border:1px solid #b0b0ae;border-bottom-color:#8e8e8c;border-radius:3px;
  background:linear-gradient(#f1f1f0,#d6d6d4);}
.close-task{width:83px;flex:none;margin:0 0 8px 122px;}
.task{flex:none;}
.task h3{height:25px;display:flex;align-items:center;gap:4px;padding:0 0 2px 8px;color:#fff;
  font-size:14px;font-weight:600;border:1px solid #fff;border-right:0;border-radius:4px 0 0 0;
  background:linear-gradient(90deg,#4a90d9,#89bdf5);}
.task h3 svg{width:16px;height:16px;}
.task-body{padding:15px 0 0 14px;background:#e8e8e6;}
.solver{padding:10px 0 15px 14px;}
.solver p{font:13px/21px "Liberation Serif",serif;color:#068206;}
.auto-row{display:flex;align-items:center;margin-top:23px;}
.auto-row label{display:flex;align-items:center;gap:5px;width:214px;flex:none;white-space:nowrap;}
.auto-row input{appearance:none;width:16px;height:16px;margin:0 0 0 2px;border:1px solid #8e8e8c;
  border-radius:3px;background:linear-gradient(#fff,#eee);}
.push.update{width:60px;flex:none;}
.filter-row{display:flex;align-items:center;}
.filter-row label{width:146px;flex:none;}
.filter-row select{appearance:none;width:140px;flex:none;height:28px;padding:0 4px;
  border:1px solid #b0b0ae;border-bottom-color:#8e8e8c;border-radius:3px;
  background:linear-gradient(#f1f1f0,#d3d3d1);}
.constraints{list-style:none;margin-top:7px;background:#fff;border:1px solid #a0a09e;
  border-right:0;color:#000;}
.constraints li{height:26px;display:flex;align-items:center;gap:13px;padding-left:10px;}
.constraints li::before{content:"";width:10px;height:10px;border-radius:50%;background:#f93b00;
  border:1px solid #8e2000;}

/* 3D view */
.mdi{flex:1;min-width:0;display:flex;flex-direction:column;}
.viewport{display:block;flex:1;min-height:0;width:100%;}
.grid{stroke:#b4b4b4;stroke-dasharray:4 3;}
.dim{fill:none;stroke:#ff2600;stroke-width:2;}
.mark{fill:#ff2600;}
.dim-text{font:22px "Liberation Sans",Arial,sans-serif;text-anchor:middle;
  fill:#c4301e;stroke:#6e3c48;stroke-width:.8;}
.axis text{font:10px "DejaVu Sans",sans-serif;fill:#111;}
.doc-tabs{height:32px;flex:none;border-top:1px solid #b8b8b6;display:flex;}
.doc-tab{display:flex;align-items:center;gap:8px;padding:0 10px 0 6px;background:#fff;
  border:1px solid #b8b8b6;border-top:0;border-radius:0 0 4px 4px;}
.doc-tab button{display:flex;margin-left:2px;}

/* report view */
.report{height:101px;flex:none;display:flex;flex-direction:column;}
.report .dock-title{height:26px;}
.log{flex:1;min-height:0;display:flex;background:#fff;border:1px solid #a0a09e;
  border-width:1px 0 0 1px;}
.log-text{flex:1;padding:1px 4px;color:#000;font:15px/17px "Liberation Serif",serif;}
.warn{color:#f00;}
.log .thumb{height:28px;margin-top:29px;}
.statusbar{height:33px;flex:none;display:flex;align-items:center;justify-content:flex-end;padding:0 3px;}
```
